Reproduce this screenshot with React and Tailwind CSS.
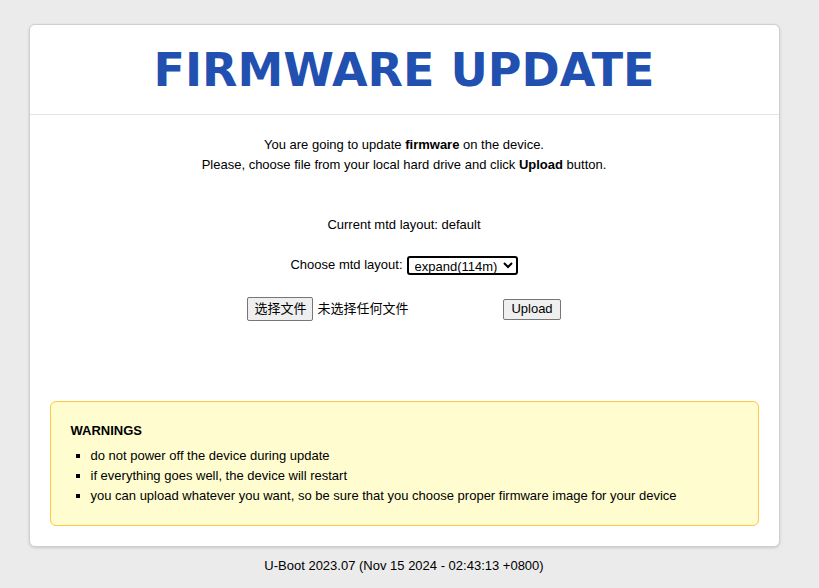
import React from "react";

const sans = "font-['Liberation_Sans','Noto_Sans_CJK_SC',Arial,sans-serif]";

function Warnings() {
  const items = [
    "do not power off the device during update",
    "if everything goes well, the device will restart",
    "you can upload whatever you want, so be sure that you choose proper firmware image for your device",
  ];
  return (
    <div className="mx-5 mb-5 rounded-[6px] border border-[#ffc83d] bg-[#fffdd0] px-5 py-[19px] text-left">
      <div className="mb-[5px] font-bold text-[13px] leading-5">WARNINGS</div>
      <ul className="list-[square] pl-5 text-[13px] leading-5">
        {items.map((t) => (
          <li key={t}>{t}</li>
        ))}
      </ul>
    </div>
  );
}

export default function App() {
  return (
    <div className={`min-h-[588px] w-full bg-[#ebebeb] pt-6 text-black ${sans}`}>
      <div className="w-[808px]">
        <div className="mx-auto w-[751px] rounded-[6px] border border-[#cfcfcf] bg-white shadow-[0_1px_3px_rgba(0,0,0,0.15)]">
          <div className="flex h-[90px] items-center justify-center border-b border-[#e3e3e3]">
            <h1 className="font-['DejaVu_Sans',Verdana,sans-serif] text-[46px] font-bold leading-none text-[#2150b0]">
              FIRMWARE UPDATE
            </h1>
          </div>

          <div className="pt-5 text-center text-[13px] leading-5">
            <p>
              You are going to update <b>firmware</b> on the device.
            </p>
            <p>
              Please, choose file from your local hard drive and click <b>Upload</b> button.
            </p>

            <p className="mt-10">Current mtd layout: default</p>

            <div className="mt-5 flex items-center justify-center gap-1">
              <span>Choose mtd layout:</span>
              <select className="h-[19px] rounded-[3px] border-2 border-black bg-white px-[2px] text-[13px] leading-4">
                <option>expand(114m)</option>
                <option>default</option>
              </select>
            </div>

            <div className="mt-[22px] flex items-center justify-center">
              <div className="flex w-[256px] items-center gap-1">
                <button className="h-[24px] rounded-[2px] border border-[#767676] bg-[#efefef] px-[6px] text-[13px]">
                  选择文件
                </button>
                <span>未选择任何文件</span>
              </div>
              <button className="h-[21px] rounded-[2px] border border-[#767676] bg-[#efefef] px-[7px] text-[13px] leading-4">
                Upload
              </button>
            </div>
          </div>

          <div className="mt-[80px]">
            <Warnings />
          </div>
        </div>

        <div className="pt-[9px] text-center text-[13px] leading-5">
          U-Boot 2023.07 (Nov 15 2024 - 02:43:13 +0800)
        </div>
      </div>
    </div>
  );
}
